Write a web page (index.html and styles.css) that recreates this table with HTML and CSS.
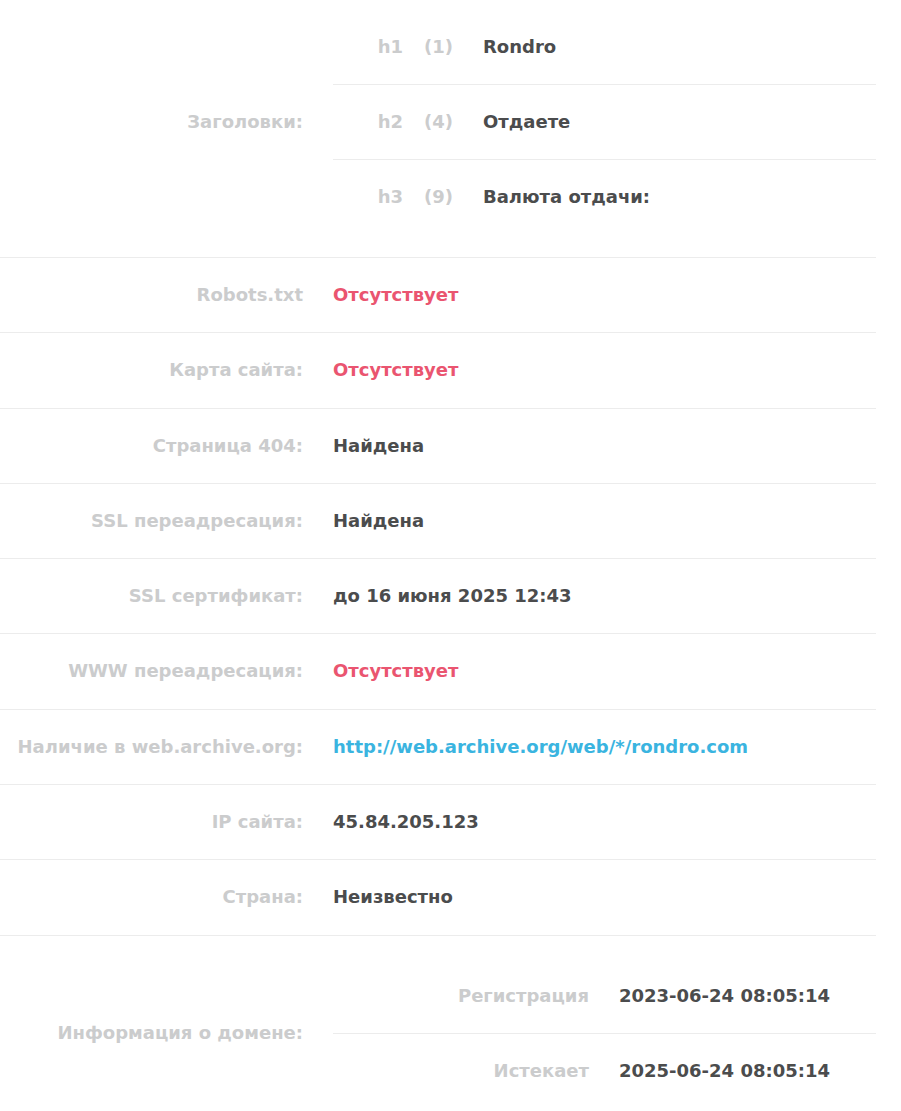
FILE: index.html
```html
<!DOCTYPE html>
<html lang="ru">
<head>
<meta charset="utf-8">
<title>Анализ сайта</title>
<link rel="stylesheet" href="styles.css">
</head>
<body>
<div class="table">
  <div class="row row--block row--first">
    <div class="label">Заголовки:</div>
    <div class="sub">
      <div class="hrow"><span class="htag">h1</span><span class="hcount">(1)</span><span class="val">Rondro</span></div>
      <div class="hrow"><span class="htag">h2</span><span class="hcount">(4)</span><span class="val">Отдаете</span></div>
      <div class="hrow"><span class="htag">h3</span><span class="hcount">(9)</span><span class="val">Валюта отдачи:</span></div>
    </div>
  </div>
  <div class="row"><div class="label">Robots.txt</div><div class="val val--bad">Отсутствует</div></div>
  <div class="row"><div class="label">Карта сайта:</div><div class="val val--bad">Отсутствует</div></div>
  <div class="row"><div class="label">Страница 404:</div><div class="val">Найдена</div></div>
  <div class="row"><div class="label">SSL переадресация:</div><div class="val">Найдена</div></div>
  <div class="row"><div class="label">SSL сертификат:</div><div class="val">до 16 июня 2025 12:43</div></div>
  <div class="row"><div class="label">WWW переадресация:</div><div class="val val--bad">Отсутствует</div></div>
  <div class="row"><div class="label">Наличие в web.archive.org:</div><div class="val"><a class="link" href="#">http://web.archive.org/web/*/rondro.com</a></div></div>
  <div class="row"><div class="label">IP сайта:</div><div class="val">45.84.205.123</div></div>
  <div class="row"><div class="label">Страна:</div><div class="val">Неизвестно</div></div>
  <div class="row row--block row--last">
    <div class="label">Информация о домене:</div>
    <div class="sub">
      <div class="drow"><span class="dlabel">Регистрация</span><span class="val">2023-06-24 08:05:14</span></div>
      <div class="drow"><span class="dlabel">Истекает</span><span class="val">2025-06-24 08:05:14</span></div>
    </div>
  </div>
</div>
</body>
</html>
```

FILE: styles.css
```css
html, body {
  margin: 0;
  padding: 0;
  background: #ffffff;
}
body {
  font-family: "DejaVu Sans", "Open Sans", sans-serif;
  font-weight: 700;
  font-size: 18px;
  overflow: hidden;
}
.table {
  width: 876px;
}
.row {
  display: grid;
  grid-template-columns: 303px 1fr;
  column-gap: 30px;
  align-items: center;
  padding: 27px 0;
  line-height: 20.3px;
  border-bottom: 1px solid #ececec;
}
.row--block {
  padding: 23px 0;
}
.row--first {
  margin-top: -13px;
}
.row--last {
  border-bottom: none;
}
.label {
  text-align: right;
  color: #cbcccd;
}
.val {
  color: #4b4c4d;
}
.val--bad {
  color: #ea5570;
}
.link {
  color: #3ab4e0;
  text-decoration: none;
}
.sub {
  display: flex;
  flex-direction: column;
}
.hrow, .drow {
  display: grid;
  align-items: center;
  padding: 27px 0;
  line-height: 20px;
  border-bottom: 1px solid #ececec;
}
.hrow:last-child, .drow:last-child {
  border-bottom: none;
}
.hrow {
  grid-template-columns: 70px 50px 1fr;
}
.htag, .hcount {
  text-align: right;
  color: #cbcccd;
}
.hrow .val {
  padding-left: 30px;
}
.drow {
  grid-template-columns: 256px 1fr;
  column-gap: 30px;
}
.dlabel {
  text-align: right;
  color: #cbcccd;
}
```
